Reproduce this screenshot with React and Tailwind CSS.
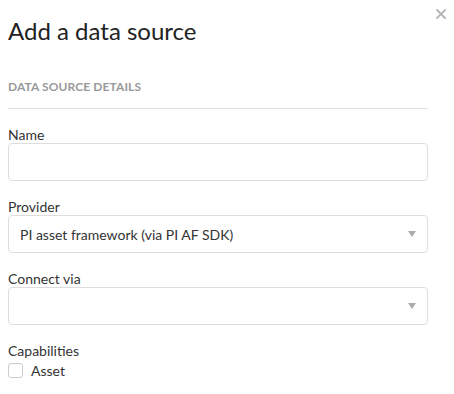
export default function App() {
  const fields = [
    { label: "Name", kind: "input" },
    { label: "Provider", kind: "select", value: "PI asset framework (via PI AF SDK)" },
    { label: "Connect via", kind: "select", value: "" },
  ];

  return (
    <div className="relative min-h-screen bg-white font-['Lato','Liberation_Sans',sans-serif] text-[#333]">
      {/* close */}
      <button className="absolute right-[8px] top-[9px] w-[10px] h-[10px] text-[#b3b3b3]">
        <svg viewBox="0 0 10 10" width="10" height="10">
          <path d="M1 1 L9 9 M9 1 L1 9" stroke="currentColor" strokeWidth="1.8" strokeLinecap="square" />
        </svg>
      </button>

      <div className="pl-[8px] pr-[26px] pt-[17px]">
        <h1 className="text-[24px] leading-[28px] text-[#222] font-normal">Add a data source</h1>

        <h2 className="mt-[34px] text-[12px] leading-[16px] font-bold tracking-[0.1px] text-[#999] uppercase">
          Data source details
        </h2>
        <div className="mt-[13px] h-px bg-[#e0e0e0]" />

        {fields.map((f) => (
          <div key={f.label} className="mt-[17px]">
            <label className="block text-[14px] leading-[17px]">{f.label}</label>
            {f.kind === "input" ? (
              <input className="block w-full h-[38px] rounded-[4px] border border-[#ddd] px-[11px] text-[14px] outline-none" />
            ) : (
              <div className="flex items-center justify-between h-[38px] rounded-[4px] border border-[#ddd] pl-[11px] pr-[11px] text-[14px]">
                <span>{f.value}</span>
                <svg width="8" height="6" viewBox="0 0 8 6">
                  <path d="M0 0 L8 0 L4 6 Z" fill="#aaa" />
                </svg>
              </div>
            )}
          </div>
        ))}

        <div className="mt-[17px]">
          <div className="text-[14px] leading-[17px]">Capabilities</div>
          <label className="mt-[4px] flex items-center gap-[8px] text-[14px] leading-[15px]">
            <span className="w-[15px] h-[15px] rounded-[3px] border border-[#ccc] bg-white" />
            Asset
          </label>
        </div>
      </div>
    </div>
  );
}
